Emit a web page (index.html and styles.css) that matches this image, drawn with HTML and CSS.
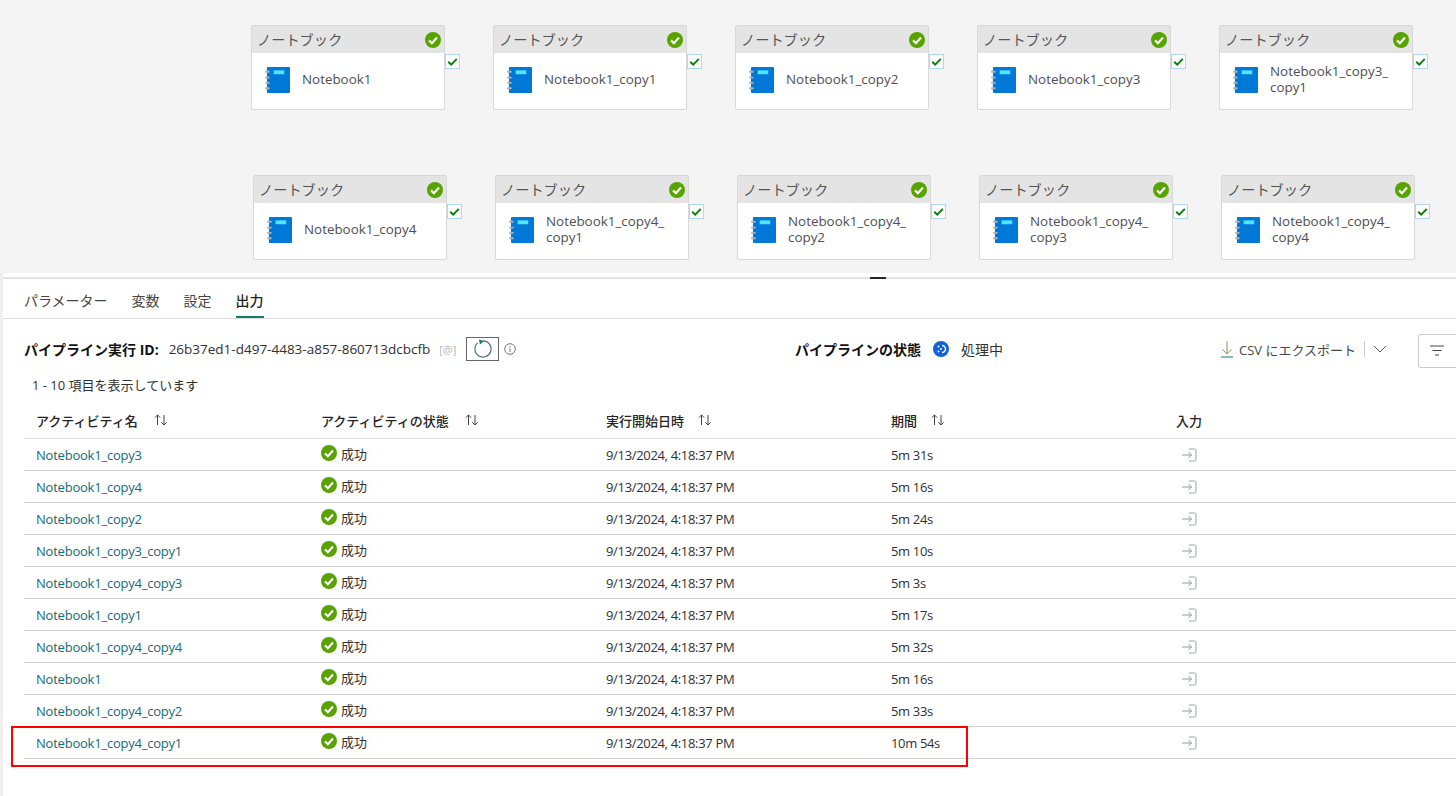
FILE: index.html
```html
<!DOCTYPE html>
<html lang="ja">
<head>
<meta charset="utf-8">
<title>パイプライン実行</title>
<link rel="stylesheet" href="styles.css">
</head>
<body>
<svg class="defs" width="0" height="0" aria-hidden="true">
  <symbol id="ok" viewBox="0 0 16 16"><circle cx="8" cy="8" r="8" fill="#57a300"/><path d="M4 8.400 6.900 11.200 12 5.600" fill="none" stroke="#fff" stroke-width="2.200"/></symbol>
  <symbol id="nb" viewBox="0 0 26 28"><rect x="2" y="0.500" width="24" height="27" rx="1" fill="#0078d7"/><rect x="9" y="4" width="11" height="4" fill="#50e6ff"/><rect x="0" y="4.500" width="5" height="2" rx="1" fill="#b0b0b0"/><rect x="0" y="10.500" width="5" height="2" rx="1" fill="#b0b0b0"/><rect x="0" y="16" width="5" height="2" rx="1" fill="#b0b0b0"/><rect x="0" y="21.500" width="5" height="2" rx="1" fill="#b0b0b0"/></symbol>
  <symbol id="tick" viewBox="0 0 14 14"><rect x="0.500" y="0.500" width="13" height="13" fill="#fff" stroke="#b3d7f3"/><path d="M3 7.200 5.800 10 11 4.500" fill="none" stroke="#107c10" stroke-width="1.800"/></symbol>
  <symbol id="sort" viewBox="0 0 16 14"><path d="M4.500 12V2M1.800 4.700 4.500 2l2.700 2.700M11 2v10M8.300 9.300 11 12l2.700-2.700" fill="none" stroke="#444" stroke-width="1"/></symbol>
  <symbol id="input" viewBox="0 0 16 16"><path d="M8 2h5.500q1.500 0 1.500 1.500v9q0 1.500-1.500 1.500H8" fill="none" stroke="#8fa3b3"/><path d="M1 8h9.500M7.500 5l3 3-3 3" fill="none" stroke="#999"/></symbol>
</svg>

<main class="page">
  <section class="canvas">
    <article class="node n1"><header class="node-head"><span>ノートブック</span><svg class="st"><use href="#ok"/></svg></header><div class="node-body"><svg class="nb"><use href="#nb"/></svg><span class="nm">Notebook1</span></div><svg class="tick"><use href="#tick"/></svg></article>
    <article class="node n2"><header class="node-head"><span>ノートブック</span><svg class="st"><use href="#ok"/></svg></header><div class="node-body"><svg class="nb"><use href="#nb"/></svg><span class="nm">Notebook1_copy1</span></div><svg class="tick"><use href="#tick"/></svg></article>
    <article class="node n3"><header class="node-head"><span>ノートブック</span><svg class="st"><use href="#ok"/></svg></header><div class="node-body"><svg class="nb"><use href="#nb"/></svg><span class="nm">Notebook1_copy2</span></div><svg class="tick"><use href="#tick"/></svg></article>
    <article class="node n4"><header class="node-head"><span>ノートブック</span><svg class="st"><use href="#ok"/></svg></header><div class="node-body"><svg class="nb"><use href="#nb"/></svg><span class="nm">Notebook1_copy3</span></div><svg class="tick"><use href="#tick"/></svg></article>
    <article class="node n5"><header class="node-head"><span>ノートブック</span><svg class="st"><use href="#ok"/></svg></header><div class="node-body"><svg class="nb"><use href="#nb"/></svg><span class="nm">Notebook1_copy3_<wbr>copy1</span></div><svg class="tick"><use href="#tick"/></svg></article>
    <article class="node n6"><header class="node-head"><span>ノートブック</span><svg class="st"><use href="#ok"/></svg></header><div class="node-body"><svg class="nb"><use href="#nb"/></svg><span class="nm">Notebook1_copy4</span></div><svg class="tick"><use href="#tick"/></svg></article>
    <article class="node n7"><header class="node-head"><span>ノートブック</span><svg class="st"><use href="#ok"/></svg></header><div class="node-body"><svg class="nb"><use href="#nb"/></svg><span class="nm">Notebook1_copy4_<wbr>copy1</span></div><svg class="tick"><use href="#tick"/></svg></article>
    <article class="node n8"><header class="node-head"><span>ノートブック</span><svg class="st"><use href="#ok"/></svg></header><div class="node-body"><svg class="nb"><use href="#nb"/></svg><span class="nm">Notebook1_copy4_<wbr>copy2</span></div><svg class="tick"><use href="#tick"/></svg></article>
    <article class="node n9"><header class="node-head"><span>ノートブック</span><svg class="st"><use href="#ok"/></svg></header><div class="node-body"><svg class="nb"><use href="#nb"/></svg><span class="nm">Notebook1_copy4_<wbr>copy3</span></div><svg class="tick"><use href="#tick"/></svg></article>
    <article class="node n10"><header class="node-head"><span>ノートブック</span><svg class="st"><use href="#ok"/></svg></header><div class="node-body"><svg class="nb"><use href="#nb"/></svg><span class="nm">Notebook1_copy4_<wbr>copy4</span></div><svg class="tick"><use href="#tick"/></svg></article>
  </section>

  <div class="splitter"><span class="grip"></span></div>

  <nav class="tabs">
    <span class="tab">パラメーター</span>
    <span class="tab">変数</span>
    <span class="tab">設定</span>
    <span class="tab active">出力</span>
  </nav>

  <section class="info">
    <div class="run">
      <strong class="label">パイプライン実行 ID:</strong>
      <span class="run-id">26b37ed1-d497-4483-a857-860713dcbcfb</span>
      <span class="copy">[@]</span>
      <button class="refresh" aria-label="更新"><svg width="20" height="20" viewBox="0 0 18 18"><path d="M4.200 3.500A7.300 7.300 0 1 0 9 1.700" fill="none" stroke="#3d6d80" stroke-width="1"/><path d="M5.300 0.500 9.800 1.700 6.300 5z" fill="#0f7b6c"/></svg></button>
      <svg class="inf" width="12" height="12" viewBox="0 0 12 12"><circle cx="6" cy="6" r="5.300" fill="none" stroke="#777"/><path d="M6 5.200V9M6 3v1.300" stroke="#777"/></svg>
    </div>
    <div class="state">
      <strong class="label">パイプラインの状態</strong>
      <svg class="spin" width="16" height="16" viewBox="0 0 16 16"><circle cx="8" cy="8" r="8" fill="#0f62d6"/><path d="M9 4.500a3.500 3.500 0 0 1 0 7" fill="none" stroke="#fff" stroke-width="1.500"/><circle cx="5.500" cy="5.500" r="1" fill="#fff"/><circle cx="5.500" cy="10.500" r="1" fill="#fff"/><circle cx="8" cy="8" r="1" fill="#fff"/></svg>
      <span>処理中</span>
    </div>
    <div class="export">
      <svg width="14" height="18" viewBox="0 0 14 18"><path d="M7 1v13M2.500 9.500 7 14l4.500-4.500" fill="none" stroke="#a88a55"/><path d="M1 17h12" stroke="#0f7b6c"/></svg>
      <span class="exp-text">CSV にエクスポート</span>
      <span class="sep"></span>
      <svg width="14" height="8" viewBox="0 0 14 8"><path d="M1 1l6 6 6-6" fill="none" stroke="#555"/></svg>
    </div>
    <button class="filter" aria-label="フィルター"><svg width="14" height="11" viewBox="0 0 14 11"><path d="M0 1h14M2.500 5.500h9M5 10h4" stroke="#444"/></svg></button>
  </section>

  <p class="count">1 - 10 項目を表示しています</p>

  <section class="table">
    <div class="row head">
      <span class="cell">アクティビティ名<svg class="sort"><use href="#sort"/></svg></span>
      <span class="cell">アクティビティの状態<svg class="sort"><use href="#sort"/></svg></span>
      <span class="cell">実行開始日時<svg class="sort"><use href="#sort"/></svg></span>
      <span class="cell">期間<svg class="sort"><use href="#sort"/></svg></span>
      <span class="cell">入力</span>
    </div>
    <div class="row"><a class="cell link">Notebook1_copy3</a><span class="cell status"><svg class="ok"><use href="#ok"/></svg>成功</span><span class="cell date">9/13/2024, 4:18:37 PM</span><span class="cell dur">5m 31s</span><span class="cell"><svg class="in"><use href="#input"/></svg></span></div>
    <div class="row"><a class="cell link">Notebook1_copy4</a><span class="cell status"><svg class="ok"><use href="#ok"/></svg>成功</span><span class="cell date">9/13/2024, 4:18:37 PM</span><span class="cell dur">5m 16s</span><span class="cell"><svg class="in"><use href="#input"/></svg></span></div>
    <div class="row"><a class="cell link">Notebook1_copy2</a><span class="cell status"><svg class="ok"><use href="#ok"/></svg>成功</span><span class="cell date">9/13/2024, 4:18:37 PM</span><span class="cell dur">5m 24s</span><span class="cell"><svg class="in"><use href="#input"/></svg></span></div>
    <div class="row"><a class="cell link">Notebook1_copy3_copy1</a><span class="cell status"><svg class="ok"><use href="#ok"/></svg>成功</span><span class="cell date">9/13/2024, 4:18:37 PM</span><span class="cell dur">5m 10s</span><span class="cell"><svg class="in"><use href="#input"/></svg></span></div>
    <div class="row"><a class="cell link">Notebook1_copy4_copy3</a><span class="cell status"><svg class="ok"><use href="#ok"/></svg>成功</span><span class="cell date">9/13/2024, 4:18:37 PM</span><span class="cell dur">5m 3s</span><span class="cell"><svg class="in"><use href="#input"/></svg></span></div>
    <div class="row"><a class="cell link">Notebook1_copy1</a><span class="cell status"><svg class="ok"><use href="#ok"/></svg>成功</span><span class="cell date">9/13/2024, 4:18:37 PM</span><span class="cell dur">5m 17s</span><span class="cell"><svg class="in"><use href="#input"/></svg></span></div>
    <div class="row"><a class="cell link">Notebook1_copy4_copy4</a><span class="cell status"><svg class="ok"><use href="#ok"/></svg>成功</span><span class="cell date">9/13/2024, 4:18:37 PM</span><span class="cell dur">5m 32s</span><span class="cell"><svg class="in"><use href="#input"/></svg></span></div>
    <div class="row"><a class="cell link">Notebook1</a><span class="cell status"><svg class="ok"><use href="#ok"/></svg>成功</span><span class="cell date">9/13/2024, 4:18:37 PM</span><span class="cell dur">5m 16s</span><span class="cell"><svg class="in"><use href="#input"/></svg></span></div>
    <div class="row"><a class="cell link">Notebook1_copy4_copy2</a><span class="cell status"><svg class="ok"><use href="#ok"/></svg>成功</span><span class="cell date">9/13/2024, 4:18:37 PM</span><span class="cell dur">5m 33s</span><span class="cell"><svg class="in"><use href="#input"/></svg></span></div>
    <div class="row"><a class="cell link">Notebook1_copy4_copy1</a><span class="cell status"><svg class="ok"><use href="#ok"/></svg>成功</span><span class="cell date">9/13/2024, 4:18:37 PM</span><span class="cell dur">10m 54s</span><span class="cell"><svg class="in"><use href="#input"/></svg></span></div>
    <div class="highlight"></div>
  </section>
</main>
</body>
</html>
```

FILE: styles.css
```css
* { box-sizing: border-box; }
html, body { margin: 0; height: 100%; overflow: hidden; }
body {
  font-family: "Open Sans", "Noto Sans CJK JP", sans-serif;
  font-size: 13px;
  color: #323130;
  background: #fff;
}
.defs { position: absolute; }
.page { height: 796px; border-left: 3px solid #f0f0f0; position: relative; }

/* Diagram canvas */
.canvas { position: relative; height: 273px; background: #f4f4f4; margin-left: -3px; }
.node {
  position: absolute;
  width: 194px;
  height: 85px;
  background: #fff;
  border: 1px solid #d8d8d8;
  border-radius: 2px;
}
.n1 { left: 251px; top: 25px; }
.n2 { left: 493px; top: 25px; }
.n3 { left: 735px; top: 25px; }
.n4 { left: 977px; top: 25px; }
.n5 { left: 1219px; top: 25px; }
.n6 { left: 253px; top: 175px; }
.n7 { left: 495px; top: 175px; }
.n8 { left: 737px; top: 175px; }
.n9 { left: 979px; top: 175px; }
.n10 { left: 1221px; top: 175px; }
.node-head {
  height: 27px;
  background: #e4e4e4;
  display: flex;
  align-items: center;
  justify-content: space-between;
  padding: 0 3px 2px 5px;
  font-size: 14.200px;
  color: #555;
}
.st { width: 16px; height: 16px; margin-top: 2px; }
.node-body {
  display: flex;
  align-items: center;
  height: 55px;
  padding: 0 0 2px 14px;
  gap: 12px;
  color: #505050;
}
.nb { width: 25px; height: 28px; flex: none; margin-left: -1px; }
.nm { width: 130px; margin-top: -2px; font-size: 13.400px; line-height: 16px; overflow-wrap: anywhere; }
.tick { position: absolute; left: 193px; top: 28px; width: 15px; height: 15px; }

/* Splitter */
.splitter { position: relative; height: 6px; border-bottom: 2px solid #e3e3e3; background: #fff; }
.grip { position: absolute; left: 867px; top: 4px; width: 16px; height: 2px; background: #252423; }

/* Tabs */
.tabs {
  display: flex;
  gap: 24px;
  height: 40px;
  padding-left: 21px;
  border-bottom: 1px solid #e0e0e0;
  font-size: 14px;
}
.tab { height: 39px; line-height: 44px; color: #484644; }
.tab.active { color: #252423; font-weight: 500; border-bottom: 2px solid #0f7b6c; }

/* Info row */
.info { position: relative; display: flex; align-items: center; height: 62px; padding: 0 0 2px 21px; }
.run { display: flex; align-items: center; width: 771px; }
.label { font-size: 14px; color: #111; }
.run-id { margin-left: 10px; font-size: 13.500px; color: #323130; }
.copy { margin-left: 9px; font-size: 11px; color: #b5b5b5; }
.refresh {
  display: flex;
  align-items: center;
  justify-content: center;
  width: 33px;
  height: 24px;
  margin-left: 10px;
  padding: 0;
  background: #fff;
  border: 1px solid #666;
}
.inf { margin-left: 5px; }
.state { display: flex; align-items: center; font-size: 14px; width: 425px; }
.state .spin { margin: 0 12px; }
.export { display: flex; align-items: center; color: #484644; }
.exp-text { margin-left: 5px; }
.sep { width: 1px; height: 16px; margin: 0 8px; background: #ccc; }
.filter {
  position: absolute;
  left: 1415px;
  top: 15px;
  width: 60px;
  height: 34px;
  padding: 1px 0 0 11px;
  text-align: left;
  background: #fff;
  border: 1px solid #ccc;
  border-radius: 2px;
}

.count { margin: 0; padding-left: 29px; height: 24px; line-height: 8px; color: #323130; }

/* Table */
.table { position: relative; margin-left: 21px; }
.row {
  display: grid;
  grid-template-columns: repeat(4, 285px) 1fr;
  align-items: center;
  height: 32px;
  border-bottom: 1px solid #d2d2d2;
}
.row.head { height: 34px; padding-bottom: 3px; border-bottom-color: #e0e0e0; font-weight: 500; color: #252423; }
.cell { display: flex; align-items: center; padding-left: 12px; }
.sort { width: 16px; height: 14px; margin-left: 15px; }
.head .cell:nth-child(n+3) .sort { margin-left: 13px; }
.link { color: #106e75; letter-spacing: -0.220px; }
.date { letter-spacing: -0.330px; }
.dur { letter-spacing: -0.350px; }
.status { gap: 4px; padding-bottom: 2px; }
.ok { width: 16px; height: 16px; margin-top: -1px; }
.in { width: 16px; height: 16px; margin-left: 5px; }
.highlight {
  position: absolute;
  left: -13px;
  top: 321px;
  width: 957px;
  height: 41px;
  border: 2px solid #f00;
  pointer-events: none;
}
```
